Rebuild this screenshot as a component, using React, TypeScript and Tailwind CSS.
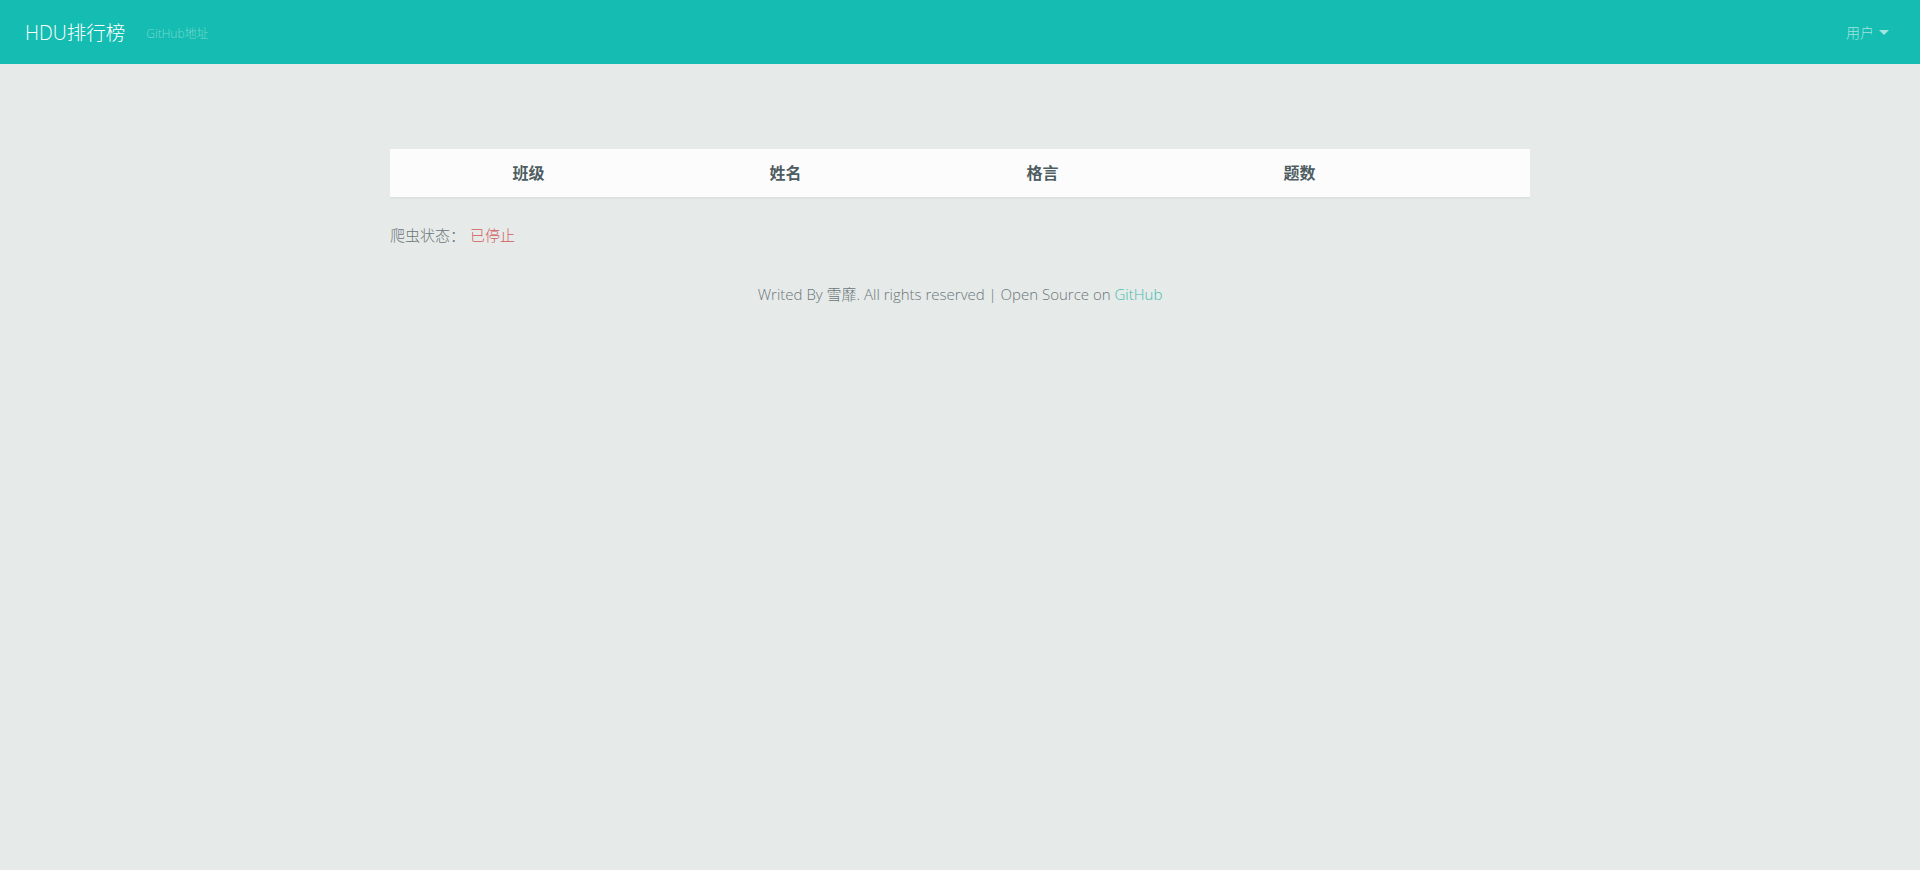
const font = { fontFamily: '"Open Sans", "Noto Sans CJK SC", sans-serif' };

const columns = ['班级', '姓名', '格言', '题数'];

export default function App() {
  return (
    <div className="min-h-screen bg-[#e6eae9] text-[#6b7779]" style={font}>
      {/* Navbar */}
      <nav className="h-16 bg-[#14bcb1] flex items-center justify-between px-[25px]">
        <div className="flex items-center">
          <span className="text-white text-[19.5px] font-light leading-none mt-[1px]">HDU排行榜</span>
          <a className="ml-[21px] text-[12px] text-[#7ad8d0] font-light mt-[4px]">GitHub地址</a>
        </div>
        <div className="flex items-center text-[14px] text-[#a5e5df] font-light mr-[6px] mt-[1px]">
          <span>用户</span>
          <span className="ml-[5px] w-0 h-0 border-l-[5px] border-r-[5px] border-t-[5px] border-l-transparent border-r-transparent border-t-[#a5e5df]" />
        </div>
      </nav>

      {/* Content */}
      <div className="w-[1140px] mx-auto pt-[85px]">
        <div className="bg-[#fcfcfc] h-[50px] border-b-2 border-[#dde2e3] pl-[10px] grid grid-cols-[repeat(4,257px)] items-center">
          {columns.map(c => (
            <div key={c} className="text-center text-[16px] font-bold text-[#4d5d61]">{c}</div>
          ))}
        </div>

        <div className="mt-[25px] text-[15px] font-light text-[#6b7779]">
          爬虫状态：<span className="ml-[5px] text-[#d45b5b]">已停止</span>
        </div>

        <div className="mt-[36px] text-center text-[15px] font-light text-[#6b7779]">
          Writed By 雪靡. All rights reserved | Open Source on{' '}
          <a className="text-[#3fbcae]">GitHub</a>
        </div>
      </div>
    </div>
  );
}
